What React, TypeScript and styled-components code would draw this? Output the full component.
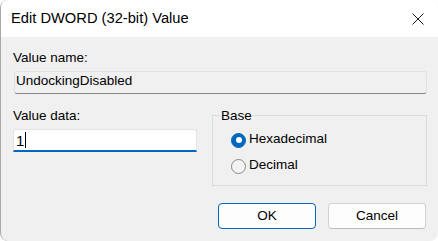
import React from "react"
import styled, { createGlobalStyle } from "styled-components"

const GlobalStyle = createGlobalStyle`
  html, body {
    margin: 0;
    padding: 0;
    background: #ffffff;
  }
  body {
    font-family: "Liberation Sans", Arial, sans-serif;
    color: #000000;
  }
`

const CloseIcon = () => (
  <svg width="12" height="12" viewBox="0 0 12 12">
    <path d="M0.5 0.5L11.5 11.5M11.5 0.5L0.5 11.5" stroke="#1a1a1a" strokeWidth="1" fill="none" />
  </svg>
)

export default function App() {
  return (
    <>
      <GlobalStyle />
      <Window>
        <TitleBar>
          <Title>Edit DWORD (32-bit) Value</Title>
          <CloseButton aria-label="Close">
            <CloseIcon />
          </CloseButton>
        </TitleBar>
        <Content>
          <Label>Value name:</Label>
          <ReadOnlyField>UndockingDisabled</ReadOnlyField>
          <Row>
            <DataColumn>
              <Label>Value data:</Label>
              <EditField>
                1<Caret />
              </EditField>
            </DataColumn>
            <GroupBox>
              <Legend>Base</Legend>
              <RadioList>
                <RadioRow>
                  <Radio $checked />
                  Hexadecimal
                </RadioRow>
                <RadioRow>
                  <Radio />
                  Decimal
                </RadioRow>
              </RadioList>
            </GroupBox>
          </Row>
          <ButtonRow>
            <Button $default>OK</Button>
            <Button>Cancel</Button>
          </ButtonRow>
        </Content>
      </Window>
    </>
  )
}

const Window = styled.div`
  width: 438px;
  height: 241px;
  box-sizing: border-box;
  display: flex;
  flex-direction: column;
  background: #f0f0f0;
  border-left: 1px solid #a9a9a9;
  border-radius: 8px;
  overflow: hidden;
`

const TitleBar = styled.div`
  height: 37px;
  flex-shrink: 0;
  display: flex;
  align-items: center;
  justify-content: space-between;
  padding: 0 14px 0 10px;
  background: #ffffff;
`

const Title = styled.div`
  font-size: 14.7px;
  line-height: 17px;
  color: #000000;
`

const CloseButton = styled.div`
  width: 12px;
  height: 12px;
  display: flex;
`

const Content = styled.div`
  display: flex;
  flex-direction: column;
  padding: 12.5px 11px 0 12px;
`

const Label = styled.div`
  font-size: 13.5px;
  line-height: 16px;
  height: 16px;
`

const ReadOnlyField = styled.div`
  margin: 5.5px 0 0 1px;
  height: 23px;
  box-sizing: border-box;
  border: 1px solid #e1e1e1;
  border-bottom-color: #868686;
  border-radius: 3px;
  padding-left: 1px;
  font-size: 13.5px;
  line-height: 17px;
`

const Row = styled.div`
  margin-top: 13.5px;
  display: flex;
  gap: 15px;
`

const DataColumn = styled.div`
  width: 184px;
  display: flex;
  flex-direction: column;
`

const EditField = styled.div`
  margin-top: 5.5px;
  height: 23px;
  box-sizing: border-box;
  display: flex;
  align-items: flex-end;
  background: #ffffff;
  border: 1px solid #e3e3e3;
  border-bottom: 2px solid #0067c0;
  border-radius: 3px 3px 0 0;
  padding: 0 0 0 2px;
  font-size: 15px;
  line-height: 18px;
`

const Caret = styled.span`
  display: inline-block;
  width: 1px;
  height: 16px;
  margin: 0 0 2px 1px;
  background: #000000;
`

const GroupBox = styled.fieldset`
  width: 215px;
  box-sizing: border-box;
  margin: 0;
  padding: 7px 0 10px 7px;
  border: 1px solid #dcdcdc;
  min-width: 0;
`

const Legend = styled.legend`
  padding: 0 1px;
  font-size: 13.5px;
  line-height: 16px;
`

const RadioList = styled.div`
  display: flex;
  flex-direction: column;
  gap: 8.5px;
  padding-left: 11px;
`

const RadioRow = styled.div`
  display: flex;
  align-items: flex-start;
  gap: 3px;
  font-size: 13.5px;
  line-height: 16px;
  height: 18px;
`

const Radio = styled.span<{ $checked?: boolean }>`
  width: 15px;
  height: 15px;
  margin-top: 2px;
  box-sizing: border-box;
  border-radius: 50%;
  flex-shrink: 0;
  display: flex;
  align-items: center;
  justify-content: center;
  background: ${(p) => (p.$checked ? "#0067c0" : "#f3f3f3")};
  border: 1px solid ${(p) => (p.$checked ? "#0067c0" : "#8a8a8a")};

  &::after {
    content: "";
    display: ${(p) => (p.$checked ? "block" : "none")};
    width: 6px;
    height: 6px;
    border-radius: 50%;
    background: #ffffff;
  }
`

const ButtonRow = styled.div`
  margin-top: 17px;
  display: flex;
  justify-content: flex-end;
  gap: 12px;
  padding-right: 1px;
`

const Button = styled.div<{ $default?: boolean }>`
  width: 98px;
  height: 26px;
  box-sizing: border-box;
  display: flex;
  align-items: center;
  justify-content: center;
  background: #fdfdfd;
  border: 1px solid ${(p) => (p.$default ? "#0067c0" : "#d3d3d3")};
  border-bottom-color: ${(p) => (p.$default ? "#0067c0" : "#bcbcbc")};
  border-radius: 4px;
  font-size: 13.5px;
  line-height: 16px;
`
